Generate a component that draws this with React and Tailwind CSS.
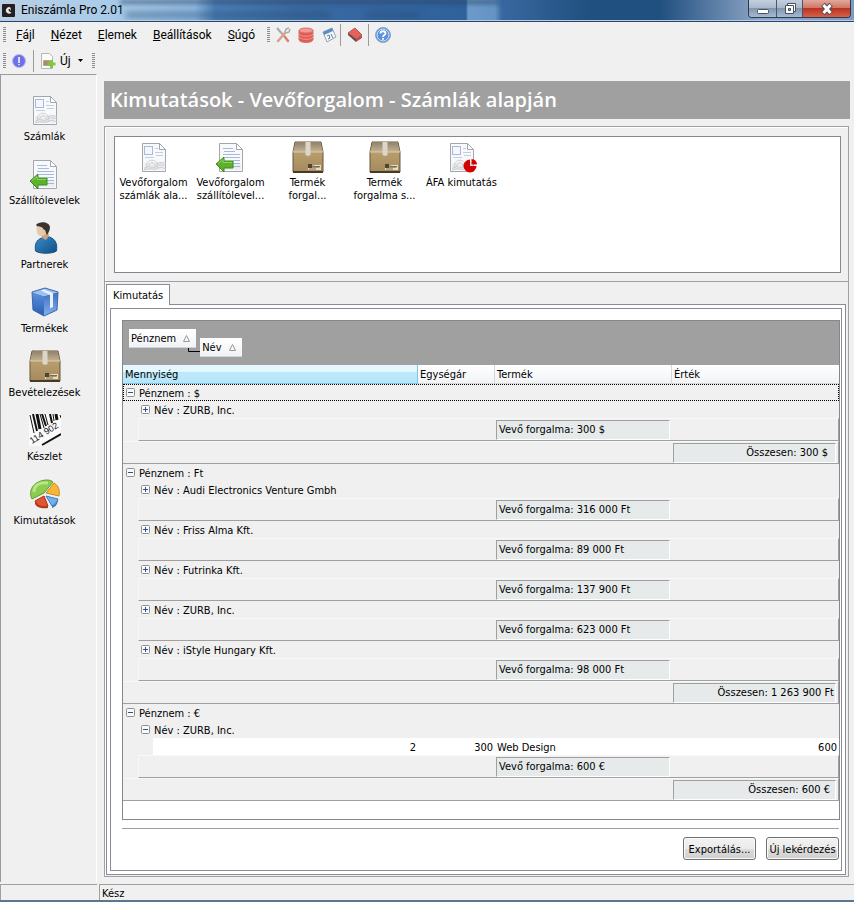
import React from "react";

const groups = [
  { currency: "$", total: "300 $", totalPad: "pr-[7px]", customers: [{ name: "ZURB, Inc.", turnover: "300 $" }] },
  {
    currency: "Ft",
    total: "1 263 900 Ft",
    totalPad: "pr-px",
    customers: [
      { name: "Audi Electronics Venture Gmbh", turnover: "316 000 Ft" },
      { name: "Friss Alma Kft.", turnover: "89 000 Ft" },
      { name: "Futrinka Kft.", turnover: "137 900 Ft" },
      { name: "ZURB, Inc.", turnover: "623 000 Ft" },
      { name: "iStyle Hungary Kft.", turnover: "98 000 Ft" },
    ],
  },
  {
    currency: "€",
    total: "600 €",
    totalPad: "pr-[5px]",
    customers: [
      {
        name: "ZURB, Inc.",
        turnover: "600 €",
        rows: [{ qty: "2", price: "300", product: "Web Design", value: "600" }],
      },
    ],
  },
];

function Page({ children }) {
  return (
    <>
      <path d="M4.5 2.5h17l6 6v22h-23z" fill="#f8f9fa" stroke="#a3a6aa" />
      <path d="M6 22h20v7H6z" fill="#eceef0" />
      <path d="M21.5 2.5v6h6z" fill="#fff" stroke="#a3a6aa" strokeLinejoin="round" />
      {children}
    </>
  );
}

function InvoiceMarks() {
  return (
    <>
      <rect x="6.5" y="5.5" width="8" height="8" fill="#f4f7fd" stroke="#a9b8dc" />
      <path d="M17 7.500h3M17 11.500h8M7 16.500h9M18 14.500h7" stroke="#c3cde6" />
      <path d="M9 27a5.500 5.500 0 1 1 10 0M11 26a3.200 3.200 0 1 1 6 0" fill="none" stroke="#c9ccd0" />
      <path d="M6 27.500q4-3 7-1.500t6-1t9 0M6 29q5-2 8-1t6-1t8 1M18 22.500q5-2 10 0" fill="none" stroke="#c9ccd0" />
    </>
  );
}

function InvoiceIcon() {
  return (
    <svg className="size-8 shrink-0" viewBox="0 0 32 32" aria-hidden="true">
      <Page><InvoiceMarks /></Page>
    </svg>
  );
}

function DeliveryIcon() {
  return (
    <svg className="size-8 shrink-0" viewBox="0 0 32 32" aria-hidden="true">
      <Page>
        <path d="M8 7.500h10M9 10.500h11M8 13.500h17M10 16.500h15M18 19.500h7M18 22.500h7M18 25.500h7" stroke="#a7b7de" />
        <path d="M1 23l8-7v4h9v7H9v4z" fill="#5cb22c" stroke="#3f8a1c" strokeLinejoin="round" />
        <path d="M3 22.500l5-4v3h9" fill="none" stroke="#8fd45f" />
      </Page>
    </svg>
  );
}

function VatIcon() {
  return (
    <svg className="size-8 shrink-0" viewBox="0 0 32 32" aria-hidden="true">
      <Page>
        <InvoiceMarks />
        <path d="M24 25V18.500a6.500 6.500 0 1 0 6.500 6.500z" fill="#d40000" />
        <path d="M25.500 23.500V18a5.500 5.500 0 0 1 5.500 5.500z" fill="#d40000" />
      </Page>
    </svg>
  );
}

function PartnerIcon() {
  return (
    <svg className="size-8 shrink-0" viewBox="0 0 32 32" aria-hidden="true">
      <defs>
        <linearGradient id="shirt" x1="0" y1="0" x2="1" y2="1">
          <stop offset="0" stopColor="#3d8cc8" />
          <stop offset="1" stopColor="#0c4f88" />
        </linearGradient>
      </defs>
      <path d="M6.500 29c-1-7 1-11 6-13l8-1c6 2 8 7 7 14-4 3-17 3-21 0z" fill="url(#shirt)" stroke="#1a5283" />
      <path d="M12 12l1 4 4 2 3-4-1-4z" fill="#c9a281" />
      <path d="M8 4c-1 5 0 10 4 10 4 0 7-3 7-7l-2-4z" fill="#e6c9aa" />
      <path d="M7 3c3-4 13-4 14 2 0 4-2 6-3 8-1-1-1-3-2-5-2 0-2-3-4-3-2-1-4 0-5-2z" fill="#3b332e" />
    </svg>
  );
}

function CubeIcon() {
  return (
    <svg className="size-8 shrink-0" viewBox="0 0 32 32" aria-hidden="true">
      <defs>
        <linearGradient id="cubeLeft" x1="0" y1="0" x2="0" y2="1">
          <stop offset="0" stopColor="#5d92dc" />
          <stop offset="1" stopColor="#2a5db4" />
        </linearGradient>
        <linearGradient id="cubeRight" x1="0" y1="0" x2="0" y2="1">
          <stop offset="0" stopColor="#3d6fc4" />
          <stop offset="1" stopColor="#83b0ec" />
        </linearGradient>
      </defs>
      <path d="M3 6l12 4v20L4 24z" fill="url(#cubeLeft)" />
      <path d="M15 10l14-4-1 18-13 6z" fill="url(#cubeRight)" />
      <path d="M3 6l13-4 13 4-14 4z" fill="#9cc0f0" />
      <path d="M3 6l13-4 13 4-1 18-13 6-11-6z" fill="none" stroke="#3a66b0" strokeLinejoin="round" />
      <path d="M12 4.500l3-1 9 3.500v14l-3 1.500V9z" fill="#e9f0fb" />
    </svg>
  );
}

function BoxIcon() {
  return (
    <svg className="size-8 shrink-0" viewBox="0 0 32 32" aria-hidden="true">
      <defs>
        <linearGradient id="boxFront" x1="0" y1="0" x2="0" y2="1">
          <stop offset="0" stopColor="#c4a874" />
          <stop offset="1" stopColor="#a48a5e" />
        </linearGradient>
        <linearGradient id="boxTop" x1="0" y1="0" x2="0" y2="1">
          <stop offset="0" stopColor="#8f8067" />
          <stop offset="1" stopColor="#c3b496" />
        </linearGradient>
      </defs>
      <path d="M3 1h26l2 10v20H1V11z" fill="url(#boxFront)" stroke="#67573c" />
      <path d="M4 1h24l3 10H1z" fill="url(#boxTop)" />
      <path d="M1 11h30" stroke="#ddcba8" />
      <path d="M13.500 1h5v13l-2 1-3-1z" fill="#dcd6ca" />
      <path d="M1 31h30" stroke="#493b22" strokeWidth="2" />
      <path d="M16 23h4v4h-4z" fill="#4d4435" />
      <path d="M20 24h9v5H16v-2h13z" fill="#e3dccb" />
      <path d="M21 25.500h7M17 28h7" stroke="#7b6c50" />
    </svg>
  );
}

function BarcodeIcon() {
  return (
    <svg className="size-8 shrink-0" viewBox="0 0 32 32" aria-hidden="true">
      <path d="M0 0h32v18L14 32H0z" fill="#fafafa" />
      <path d="M1 1l4 18M11 0l4 14M16 0l3 11M24 0l1 7M31 1l1 3" stroke="#111" strokeWidth="1" />
      <path d="M4 0l4 17M13 0l4 12M21 0l2 9" stroke="#111" strokeWidth="2" />
      <path d="M8 0l3 15M27 0l1 6" stroke="#111" strokeWidth="3" />
      <g transform="rotate(-32 3 30)" fill="#111" fontFamily="Liberation Sans, sans-serif" fontSize="9">
        <text x="3" y="30">114 902</text>
      </g>
      <path d="M13 31l19-11" stroke="#111" strokeWidth="2" />
    </svg>
  );
}

function PieIcon() {
  return (
    <svg className="size-8 shrink-0" viewBox="0 0 32 32" aria-hidden="true">
      <path d="M15 15L3 21C-2 11 7 2 18 2c3 0 5 1 6 2z" fill="#8dcc4f" stroke="#5f9e2c" />
      <path d="M5 14C5 7 11 4 19 5" fill="none" stroke="#b9e688" strokeWidth="3" />
      <path d="M17 15l8-10c5 3 6 8 5 13z" fill="#f6b63a" stroke="#cd8a1c" />
      <path d="M17 18l12 3c-1 3-3 5-6 7z" fill="#6fb2ec" stroke="#3d7fc0" />
      <path d="M15 18l4 10c-5 2-10 1-13-5z" fill="#e2542f" stroke="#ad3216" />
      <path d="M6 23c3 5 8 6 13 5v2c-5 1-11 0-13-4z" fill="#b03a1c" />
      <path d="M23 28c3-1 5-4 6-7v2c-1 4-3 6-6 7z" fill="#3a74ad" />
    </svg>
  );
}

const navItems = [
  ["Számlák", InvoiceIcon],
  ["Szállítólevelek", DeliveryIcon],
  ["Partnerek", PartnerIcon],
  ["Termékek", CubeIcon],
  ["Bevételezések", BoxIcon],
  ["Készlet", BarcodeIcon],
  ["Kimutatások", PieIcon],
];

const reports = [
  [["Vevőforgalom", "számlák ala..."], InvoiceIcon],
  [["Vevőforgalom", "szállítólevel..."], DeliveryIcon],
  [["Termék", "forgal..."], BoxIcon],
  [["Termék", "forgalma s..."], BoxIcon],
  [["ÁFA kimutatás"], VatIcon],
];

function Grip() {
  return (
    <svg className="h-4 w-1 shrink-0" viewBox="0 0 4 16" aria-hidden="true">
      <path d="M1.500 0v16" stroke="#8c8c8c" strokeWidth="3" strokeDasharray="1 1" />
    </svg>
  );
}

function Divider() {
  return <div className="h-[22px] w-px bg-[#9a9a9a]" />;
}

function ToolButton({ label, children }) {
  return (
    <button type="button" aria-label={label} className="flex size-[23px] items-center justify-center">
      <svg className="size-4" viewBox="0 0 16 16" aria-hidden="true">{children}</svg>
    </button>
  );
}

function MenuItem({ hotkey, rest }) {
  return (
    <button type="button" className="px-2 leading-4">
      <span className="underline">{hotkey}</span>
      {rest}
    </button>
  );
}

function TitleBar() {
  return (
    <header className="relative flex h-[22px] shrink-0 items-start overflow-hidden border-b border-[#2b4468] bg-[linear-gradient(90deg,#b9cfe4_0px,#a9cbe9_110px,#8fb9e0_195px,#4b7eb6_215px,#3a6aa4_300px,#2f619b_466px,#6d9ac9_468px,#6493c4_495px,#38689f_502px,#20507f_590px,#20507f_660px,#4b719c_700px,#8ca5c4_760px,#7f9bbd_854px)]">
      <div className="absolute top-0 left-[120px] h-1 w-[380px] bg-[#28435f]/60 blur-[2px]" />
      <div className="absolute top-3 left-[125px] h-[6px] w-[205px] rounded bg-[#27496d]/50 blur-[3px]" />
      <div className="absolute top-3 left-[366px] h-[6px] w-[55px] rounded bg-[#27496d]/50 blur-[3px]" />
      <div className="absolute inset-x-0 bottom-0 h-px bg-[#b4cce4]" />
      <svg className="relative mt-1 ml-0.5 h-[13px] w-[13px]" viewBox="0 0 13 13" aria-hidden="true">
        <rect width="13" height="13" rx="1" fill="#231f20" />
        <path d="M8.500 3.500A3.200 3.200 0 1 0 9.500 8.500L7 7.500 9 6z" fill="#e8e8e8" />
        <circle cx="7.500" cy="6" r="1" fill="#231f20" />
      </svg>
      <h1 className="relative ml-1.5 flex-1 font-[Roboto,'Noto_Sans',sans-serif] text-xs leading-[21px] font-normal text-black">Eniszámla Pro 2.01</h1>
      <div className="relative mr-[3px] flex h-[18px] overflow-hidden rounded-b border border-t-0 border-[#2c3a50]">
        <button type="button" aria-label="Kis méret" className="flex w-7 items-center justify-center border-r border-[#46586f] bg-[linear-gradient(180deg,#c3cfde_0%,#a9b8ca_48%,#8295ae_50%,#a4bbd4_100%)]">
          <svg className="h-4 w-4" viewBox="0 0 16 16"><rect x="2.500" y="8.500" width="11" height="4" rx="1" fill="#fff" stroke="#46525f" /></svg>
        </button>
        <button type="button" aria-label="Előző méret" className="flex w-[26px] items-center justify-center border-r border-[#46586f] bg-[linear-gradient(180deg,#c3cfde_0%,#a9b8ca_48%,#8295ae_50%,#a4bbd4_100%)]">
          <svg className="h-4 w-4" viewBox="0 0 16 16">
            <path d="M5.500 2.500h8v8h-8z" fill="#fff" stroke="#46525f" />
            <path d="M3.500 4.500h8v8h-8z" fill="#fff" stroke="#46525f" />
            <path d="M6.500 7.500h2v2h-2z" fill="#8799b0" stroke="#46525f" />
          </svg>
        </button>
        <button type="button" aria-label="Bezárás" className="flex w-[47px] items-center justify-center bg-[linear-gradient(180deg,#e0aa9c_0%,#cf7463_48%,#b93420_50%,#d8604a_100%)]">
          <svg className="h-4 w-4" viewBox="0 0 16 16">
            <path d="M4 3.500l8 9M12 3.500l-8 9" stroke="#5a4a52" strokeWidth="5" />
            <path d="M4.500 4l7 8M11.500 4l-7 8" stroke="#fff" strokeWidth="3" />
          </svg>
        </button>
      </div>
    </header>
  );
}

function Toolbars() {
  return (
    <div className="shrink-0 font-[Roboto,'Noto_Sans',sans-serif] text-xs">
      <nav className="flex h-[26px] items-center pl-[3px]">
        <Grip />
        <div className="flex pl-px">
          <MenuItem hotkey="F" rest="ájl" />
          <MenuItem hotkey="N" rest="ézet" />
          <MenuItem hotkey="E" rest="lemek" />
          <MenuItem hotkey="B" rest="eállítások" />
          <MenuItem hotkey="S" rest="úgó" />
        </div>
        <div className="flex items-center pl-1">
          <Grip />
          <ToolButton label="Eszközök">
            <path d="M2 1l8 9M3 2l2 3" stroke="#a9a9a9" strokeWidth="2" />
            <path d="M14 1l-3 1-1 3 1 1 3-1 1-3" fill="none" stroke="#a9a9a9" strokeWidth="1.500" />
            <path d="M10 6l-7 8" stroke="#d9a08c" strokeWidth="2.500" strokeLinecap="round" />
            <path d="M10 10l3 4" stroke="#d9846c" strokeWidth="2.500" strokeLinecap="round" />
          </ToolButton>
          <ToolButton label="Adatbázis">
            <path d="M1 3.500v9c0 4 14 4 14 0v-9z" fill="#e05a55" stroke="#d8706b" />
            <ellipse cx="8" cy="3.500" rx="7" ry="2.500" fill="#f39a94" stroke="#d8706b" />
            <path d="M1 7c1 3 13 3 14 0M1 10c1 3 13 3 14 0" fill="none" stroke="#f09a94" />
          </ToolButton>
          <ToolButton label="Naptár">
            <path d="M2 5l9-4 4 9-9 5z" fill="#f3f7fb" stroke="#93a5b8" />
            <path d="M2 5l9-4 1 3-9 4z" fill="#5b8cc4" />
            <path d="M6 9l2-1 1 3-2 1M10 7l2 4" fill="none" stroke="#68798c" />
          </ToolButton>
          <Divider />
          <div className="px-0.5">
            <ToolButton label="Napló">
              <path d="M1 6l7-5 7 7-6 4z" fill="#e0645c" stroke="#c0524b" />
              <path d="M1 6l8 6v3L1 8z" fill="#6c4745" />
              <path d="M9 12l6-4v3l-6 4z" fill="#b3524c" />
            </ToolButton>
          </div>
          <Divider />
          <div className="px-0.5">
            <ToolButton label="Súgó">
              <circle cx="8" cy="8" r="7.500" fill="#4f86d2" stroke="#8aa6cd" />
              <circle cx="8" cy="8" r="6" fill="#5b92dd" stroke="#dce8f8" />
              <path d="M5.500 6.500c0-3 5-3 5 0 0 1.700-2.500 1.500-2.500 3.500M8 11v1.800" fill="none" stroke="#fff" strokeWidth="1.800" />
            </ToolButton>
          </div>
        </div>
      </nav>
      <div className="flex h-[26px] items-center pl-[3px]">
        <Grip />
        <ToolButton label="Információ">
          <circle cx="8" cy="8" r="6.500" fill="#6f70e8" stroke="#b9baf2" />
          <path d="M8 4v6M8 11v1" stroke="#fff" strokeWidth="1.500" />
        </ToolButton>
        <div className="pr-1 pl-[3px]"><Divider /></div>
        <button type="button" className="flex items-center gap-1 pr-2 pl-0.5">
          <svg className="size-4" viewBox="0 0 16 16" aria-hidden="true">
            <path d="M1.500.5h8l3 3v12h-11z" fill="#fbfbfb" stroke="#b5b8bb" />
            <path d="M3.500 7.500h6v5h-6z" fill="#a39068" stroke="#b3a68a" />
            <path d="M11.500 7v8M7.500 11h8" stroke="#86c440" strokeWidth="3" />
          </svg>
          Új
          <svg className="ml-0.5 h-1 w-[7px]" viewBox="0 0 7 4" aria-hidden="true"><path d="M1 0h5L3.500 3z" /></svg>
        </button>
        <Grip />
      </div>
    </div>
  );
}

function Sidebar() {
  return (
    <nav className="flex w-[97px] shrink-0 flex-col border-t border-r border-l border-t-[#9b9b9b] border-r-white border-l-[#9b9b9b] pt-[19px] pr-2">
      {navItems.map(([label, Icon]) => (
        <button key={label} type="button" className="flex h-16 flex-col items-center gap-[3px]">
          <Icon />
          <span className="leading-4 whitespace-nowrap">{label}</span>
        </button>
      ))}
    </nav>
  );
}

function Expander({ open }) {
  return (
    <button type="button" aria-label={open ? "Összecsukás" : "Kibontás"} aria-expanded={open} className="size-[9px]">
      <svg className="size-[9px]" viewBox="0 0 9 9">
        <rect x=".5" y=".5" width="8" height="8" rx="1" fill="#fafafa" stroke="#8e8f8f" />
        <path d={open ? "M2 4.500h5" : "M2 4.500h5M4.500 2v5"} stroke="#2f4f9f" />
      </svg>
    </button>
  );
}

function GroupLabel({ open, children }) {
  return (
    <div className="flex h-[17px] items-center gap-1 pl-[3px] whitespace-nowrap">
      <Expander open={open} />
      <span className="pt-px">{children}</span>
    </div>
  );
}

function SummaryCell({ right, pad, children }) {
  const base = "flex h-5 items-center border border-t-[#a0a0a0] border-r-white border-b-white border-l-[#a0a0a0] bg-[#e6eaeb]";
  return <div className={right ? `${base} mr-0.5 ml-px justify-end ${pad}` : `${base} ml-px mr-0.5 pl-0.5`}>{children}</div>;
}

function CustomerRows({ customer }) {
  const rows = customer.rows ?? [];
  const line = "border-t border-b border-t-[#f8f8f8] border-b-[#a0a0a0]";
  return (
    <>
      <tr className="h-[17px]">
        <td />
        <td colSpan={5}><GroupLabel open={rows.length > 0}>Név : {customer.name}</GroupLabel></td>
      </tr>
      {rows.map((row) => (
        <tr key={row.product} className="h-[17px]">
          <td colSpan={2} />
          <td className="bg-white pt-px pr-0.5 text-right">{row.qty}</td>
          <td className="bg-white pt-px pr-0.5 text-right">{row.price}</td>
          <td className="bg-white pt-px pl-0.5">{row.product}</td>
          <td className="bg-white pt-px pr-0.5 text-right">{row.value}</td>
        </tr>
      ))}
      <tr className="h-[23px]">
        <td />
        <td colSpan={3} className={`border-l border-l-[#f8f8f8] ${line}`} />
        <td className={line}><SummaryCell>Vevő forgalma: {customer.turnover}</SummaryCell></td>
        <td className={`border-r border-r-[#a0a0a0] ${line}`} />
      </tr>
    </>
  );
}

function GroupRows({ group, focused }) {
  return (
    <tbody>
      <tr className="h-[17px]">
        <td colSpan={6} className={focused ? "outline-1 -outline-offset-1 outline-black outline-dotted" : ""}>
          <GroupLabel open>Pénznem : {group.currency}</GroupLabel>
        </td>
      </tr>
      {group.customers.map((c) => <CustomerRows key={c.name} customer={c} />)}
      <tr className="h-[23px]">
        <td colSpan={5} className="border-t border-b border-t-[#f8f8f8] border-b-[#a0a0a0]" />
        <td className="border-t border-r border-b border-t-[#f8f8f8] border-r-[#a0a0a0] border-b-[#a0a0a0]">
          <SummaryCell right pad={group.totalPad}>Összesen: {group.total}</SummaryCell>
        </td>
      </tr>
    </tbody>
  );
}

function SortChip({ children }) {
  return (
    <button type="button" className="flex h-[19px] items-center gap-[7px] border-b border-[#cfd2d6] bg-linear-to-b from-white to-[#f1f2f4] pr-1.5 pl-0.5">
      {children}
      <svg className="size-[7px]" viewBox="0 0 7 7" aria-hidden="true"><path d="M3.500.5l3 6h-6z" fill="none" stroke="#999" /></svg>
    </button>
  );
}

function ReportGrid() {
  const head = "border-b border-[#d5d5d5] bg-linear-to-b from-white to-[#f1f3f5] pt-px pl-0.5 text-left font-normal";
  return (
    <div className="flex flex-1 flex-col border border-[#828790] bg-white">
      <div className="flex h-11 items-start bg-[#a0a0a0] pt-2 pl-1.5">
        <SortChip>Pénznem</SortChip>
        <svg className="-ml-2 mt-[19px] h-1 w-3" viewBox="0 0 12 4" aria-hidden="true"><path d="M.5 0v3.500H12" fill="none" stroke="#000" /></svg>
        <div className="pt-[9px]"><SortChip>Név</SortChip></div>
      </div>
      <table className="w-full table-fixed border-separate border-spacing-0 bg-[#f0f0f0]">
        <colgroup>
          <col className="w-[15px]" />
          <col className="w-[15px]" />
          <col className="w-[265px]" />
          <col className="w-[77px]" />
          <col className="w-[177px]" />
          <col />
        </colgroup>
        <thead>
          <tr className="h-[19px]">
            <th colSpan={3} className="border-r border-b border-[#7fc4e6] bg-[linear-gradient(180deg,#e3f7ff_0%,#e3f7ff_40%,#bde9fb_41%,#b7e5f8_100%)] pt-px pl-0.5 text-left font-normal">Mennyiség</th>
            <th className={`${head} border-r`}>Egységár</th>
            <th className={`${head} border-r`}>Termék</th>
            <th className={head}>Érték</th>
          </tr>
        </thead>
        {groups.map((g, i) => <GroupRows key={g.currency} group={g} focused={i === 0} />)}
      </table>
    </div>
  );
}

function ActionButton({ children }) {
  return (
    <button type="button" className="h-[23px] w-[73px] rounded-[3px] border border-[#707070] bg-[linear-gradient(180deg,#f2f2f2_0%,#ebebeb_50%,#dddddd_51%,#cfcfcf_100%)] pt-px whitespace-nowrap shadow-[inset_0_0_0_1px_#fafafa]">
      <span className="flex justify-center">{children}</span>
    </button>
  );
}

function MainPanel() {
  return (
    <main className="flex min-w-0 flex-1 flex-col pt-[7px] pr-1 pb-[5px] pl-[7px]">
      <h2 className="h-[38px] bg-[#a0a0a0] px-1.5 font-['Open_Sans','Noto_Sans',sans-serif] text-xl leading-[37px] font-semibold text-white">
        Kimutatások - Vevőforgalom - Számlák alapján
      </h2>
      <div className="mt-[7px] mr-px flex flex-1 flex-col border border-[#a0a0a0] shadow-[inset_1px_1px_0_#fff]">
        <div className="border-b border-[#a0a0a0] pt-[9px] pr-[7px] pb-2 pl-[9px]">
          <ul className="flex h-[137px] border border-[#828790] bg-white">
            {reports.map(([lines, Icon], i) => (
              <li key={i} className="w-[77px] pt-1">
                <button type="button" className="flex w-full flex-col items-center gap-[3px]">
                  <Icon />
                  <span className="leading-[13px] whitespace-nowrap">
                    {lines.map((line) => <span key={line} className="block">{line}</span>)}
                  </span>
                </button>
              </li>
            ))}
          </ul>
        </div>
        <div className="flex flex-1 flex-col pt-0.5 pr-0.5 pb-px pl-px">
          <div role="tablist" className="flex h-5">
            <button type="button" role="tab" aria-selected="true" className="relative -mb-px h-[21px] border border-b-0 border-[#898c95] bg-white px-1.5">Kimutatás</button>
          </div>
          <section role="tabpanel" className="flex flex-1 flex-col border border-[#898c95] bg-white p-[3px]">
            <div className="flex flex-1 flex-col border border-[#898c95] pt-[11px] pr-px pb-2.5 pl-[11px]">
              <ReportGrid />
              <div className="mt-2 mr-px flex justify-end gap-2.5 border-t border-[#a0a0a0] pt-2">
                <ActionButton>Exportálás...</ActionButton>
                <ActionButton>Új lekérdezés</ActionButton>
              </div>
            </div>
          </section>
        </div>
      </div>
    </main>
  );
}

export default function App() {
  return (
    <div className="flex min-h-screen flex-col bg-[#f0f0f0] font-['DejaVu_Sans_Condensed','DejaVu_Sans',sans-serif] text-[11px] leading-[13px] text-black">
      <TitleBar />
      <Toolbars />
      <div className="flex flex-1">
        <Sidebar />
        <MainPanel />
      </div>
      <footer className="flex h-5 shrink-0 gap-0.5 border-b-2 border-[#5b7690] pt-0.5">
        <div className="w-[97px] border-t border-l border-[#a0a0a0]" />
        <div className="flex-1 border-t border-l border-[#a0a0a0] pt-px pl-0.5 leading-[15px]">Kész</div>
      </footer>
    </div>
  );
}
